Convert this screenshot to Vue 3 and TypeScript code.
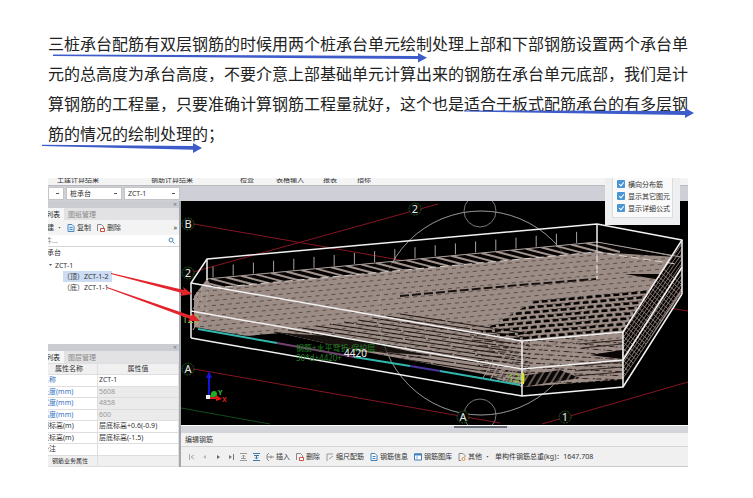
<script setup lang="ts">
import { ref } from 'vue'

interface Segment { x1: number; y1: number; x2: number; y2: number }
interface Property { name: string; value: string; linked: boolean; locked: boolean }
interface Bubble { x: number; y: number; label: string }

const ribbonGroups = ['土建计算结果', '钢筋计算结果', '检查', '表格输入', '报表', '指标']

const properties: Property[] = [
  { name: '名称', value: 'ZCT-1', linked: true, locked: false },
  { name: '长度(mm)', value: '5608', linked: true, locked: true },
  { name: '宽度(mm)', value: '4858', linked: true, locked: true },
  { name: '高度(mm)', value: '600', linked: true, locked: true },
  { name: '顶标高(m)', value: '层底标高+0.6(-0.9)', linked: false, locked: false },
  { name: '底标高(m)', value: '层底标高(-1.5)', linked: false, locked: false },
  { name: '备注', value: '', linked: false, locked: false },
]

const options = ref([
  { label: '横向分布筋', on: true },
  { label: '显示其它图元', on: true },
  { label: '显示详细公式', on: true },
])

const bubbles: Bubble[] = [
  { x: 188, y: 224, label: 'B' },
  { x: 188, y: 273, label: '2' },
  { x: 415, y: 209, label: '2' },
  { x: 188, y: 369, label: 'A' },
  { x: 463, y: 417, label: 'A' },
  { x: 565, y: 417, label: '1' },
]

function series(count: number, make: (i: number) => Segment): Segment[] {
  return Array.from({ length: count }, (_, i) => make(i))
}

// Height of the back row of bars at a given x
const backY = (x: number): number => 279 - (x - 207) * 0.095

const hooks = series(19, i => {
  const x = 213 + i * 20.2
  return { x1: x, y1: backY(x) - 12, x2: x, y2: backY(x) - 1 }
})
const slots = series(27, i => {
  const x = 196 + i * 15
  return { x1: x, y1: backY(x), x2: x + 34, y2: backY(x) + 9 }
})
const topGaps = series(18, i => ({ x1: 197, y1: 292 + i * 5, x2: 684, y2: 247 + i * 5 }))
const frontGaps = series(14, i => ({ x1: 400 - i * 14, y1: 314 + i * 2, x2: 530, y2: 334 + i * 4 }))
const coarseGaps = series(13, i => ({ x1: 470, y1: 308 + i * 5, x2: 690, y2: 288 + i * 5 }))
const cornerGaps = series(12, i => ({ x1: 470, y1: 330 + i * 5, x2: 630, y2: 344 + i * 4 }))
const bars = series(24, i => ({ x1: 484 + i * 7, y1: 390, x2: 544 + i * 7, y2: 290 }))
const faceBars = series(30, i => ({ x1: 618, y1: 325 + i * 5, x2: 688, y2: 225 + i * 5 }))
const faceCross = series(30, i => ({ x1: 618, y1: 230 + i * 6, x2: 688, y2: 290 + i * 6 }))
</script>

<template>
  <main class="page">
    <p class="lead">三桩承台配筋有双层钢筋的时候用两个桩承台单元绘制处理上部和下部钢筋设置两个承台单元的总高度为承台高度，不要介意上部基础单元计算出来的钢筋在承台单元底部，我们是计算钢筋的工程量，只要准确计算钢筋工程量就好，这个也是适合于板式配筋承台的有多层钢筋的情况的绘制处理的；</p>

    <svg class="marks" width="753" height="160" viewBox="0 0 753 160" aria-hidden="true">
      <g fill="#3d5cc9">
        <path d="M53 54.500L418 56V53L427 57.700L418 62.500V59L53 56Z" />
        <path d="M464 110.500L685 111V108L694 113L685 118V115L464 111.500Z" />
        <path d="M42 144.800L193 146V143L202 148L193 153V149.800L42 146Z" />
      </g>
    </svg>

    <section class="app">
      <header class="ribbon">
        <span v-for="g in ribbonGroups" :key="g">{{ g }}</span>
      </header>

      <div class="pickers">
        <select class="pick narrow" aria-label="楼层"><option></option></select>
        <select class="pick" aria-label="构件类型"><option>桩承台</option></select>
        <select class="pick" aria-label="构件"><option>ZCT-1</option></select>
      </div>

      <div class="work">
        <aside class="dock">
          <div class="grip"><button aria-label="关闭">×</button></div>
          <nav class="tabs">
            <button class="tab list active">构件列表</button>
            <button class="tab">图纸管理</button>
          </nav>
          <div class="tools">
            <button class="new">新建 <i class="caret"></i></button>
            <button>
              <svg width="8" height="8" viewBox="0 0 8 8"><path d="M1 .5H5L7 2.500V7.500H1Z" fill="#dcebf8" stroke="#4c8ac5" /><path d="M2.500 3.500H5.500M2.500 5.500H5.500" stroke="#4c8ac5" /></svg>复制
            </button>
            <button>
              <svg width="8" height="8" viewBox="0 0 8 8"><path d="M.5 7V.5H4.500L6.500 2.500V4" fill="none" stroke="#888" /><path d="M3.500 4.500H7.500V7.500H3.500Z" fill="#fff" stroke="#cf4b45" /></svg>删除
            </button>
            <button class="more" aria-label="更多">»</button>
          </div>
          <label class="search">
            <input type="text" placeholder="搜索构件..." aria-label="搜索构件" />
            <svg width="7" height="7" viewBox="0 0 7 7"><circle cx="3" cy="3" r="2" fill="none" stroke="#4788bd" /><path d="M4.500 4.500L6.500 6.500" stroke="#4788bd" /></svg>
          </label>
          <ul class="tree">
            <li>桩承台</li>
            <li class="child"><i class="caret"></i>ZCT-1</li>
            <li class="leaf"><span class="picked">（顶）ZCT-1-2</span></li>
            <li class="leaf"><span>（底）ZCT-1-1</span></li>
          </ul>
          <div class="grip"><button aria-label="关闭属性">×</button></div>
          <nav class="tabs">
            <button class="tab list active">属性列表</button>
            <button class="tab">图层管理</button>
          </nav>
          <table class="props">
            <thead><tr><th>属性名称</th><th>属性值</th></tr></thead>
            <tbody>
              <tr v-for="p in properties" :key="p.name" :class="{ locked: p.locked }">
                <td :class="{ linked: p.linked }">{{ p.name }}</td>
                <td>{{ p.value }}</td>
              </tr>
              <tr class="group"><td><button class="expand" aria-label="展开"></button>钢筋业务属性</td><td></td></tr>
            </tbody>
          </table>
        </aside>

        <div class="stage">
          <svg class="scene" viewBox="181 201 507 224" preserveAspectRatio="xMinYMin slice" role="img" aria-label="承台钢筋三维">
            <defs>
              <clipPath id="mat"><path d="M207 279L597 242L682 257V292L623 379L522 387L483 374L350 349L280 333L247 336L194 327V296Z" /></clipPath>
              <clipPath id="coarse"><path d="M540 298L600 284L655 284L623 331L522 341L480 332Z" /></clipPath>
              <clipPath id="corner"><path d="M470 334L522 341L623 332V380L522 387L480 374Z" /></clipPath>
              <clipPath id="face"><path d="M623 332L682 240V288L623 379Z" /></clipPath>
              <clipPath id="backrow"><path d="M207 279L597 242L676 257L597 252L213 288Z" /></clipPath>
            </defs>
            <rect x="181" y="201" width="507" height="224" fill="#000" />

            <g stroke="#851522" stroke-width="1">
              <path d="M194 224L417 263M193 272L438 204M194 369L500 423M542 424L688 382M650 305L688 311" />
            </g>
            <path d="M181 408L270 424" stroke="#164a1d" />
            <g fill="none" stroke="#777">
              <circle cx="481" cy="313" r="102" />
              <circle cx="480" cy="211" r="16" />
              <circle cx="480" cy="415" r="16" />
            </g>

            <g clip-path="url(#mat)">
              <rect x="181" y="201" width="507" height="224" fill="#9c8c86" />
              <g stroke="#5d4e48" stroke-width="1" stroke-dasharray="4 4">
                <line v-for="(s, i) in topGaps" :key="i" v-bind="s" :stroke-dashoffset="i * 3" />
              </g>
              <g stroke="#1d1613" stroke-width="1" stroke-dasharray="46 2">
                <line v-for="(s, i) in frontGaps" :key="i" v-bind="s" :stroke-dashoffset="i * 9" />
              </g>
              <path d="M280 333L345 337L430 356L350 349Z" fill="#191310" />
              <path d="M400 296L520 285L596 279" fill="none" stroke="#171210" stroke-width="2" stroke-dasharray="9 3" />
              <path d="M625 274L664 274L667 281Z" fill="#080504" />
            </g>
            <g clip-path="url(#coarse)">
              <g stroke="#060403" stroke-width="2.500" stroke-dasharray="6 3">
                <line v-for="(s, i) in coarseGaps" :key="i" v-bind="s" :stroke-dashoffset="i * 4" />
              </g>
            </g>
            <g clip-path="url(#corner)">
              <g stroke="#2c231f" stroke-width="1" stroke-dasharray="9 3">
                <line v-for="(s, i) in cornerGaps" :key="i" v-bind="s" :stroke-dashoffset="i * 5" />
              </g>
              <path d="M522 376L560 370L580 378L522 387Z" fill="#0b0706" />
              <g stroke="#a3938c" stroke-width="2">
                <line v-for="(s, i) in bars" :key="i" v-bind="s" stroke-opacity="0.6" />
              </g>
              <path d="M590 355L622 350V359L605 357Z" fill="#090605" />
              <path d="M580 344L622 340M582 348L622 344M575 366L622 362M575 371L622 367M575 376L622 372" stroke="#2c231f" />
            </g>
            <g clip-path="url(#backrow)">
              <rect x="181" y="201" width="507" height="100" fill="#060404" />
              <g stroke="#a3948e" stroke-width="2">
                <line v-for="(s, i) in slots" :key="i" v-bind="s" />
              </g>
            </g>
            <g clip-path="url(#face)">
              <rect x="600" y="220" width="88" height="180" fill="#070505" />
              <g stroke="#85766f" stroke-width="1">
                <line v-for="(s, i) in faceBars" :key="i" v-bind="s" />
                <line v-for="(s, i) in faceCross" :key="'c' + i" v-bind="s" />
              </g>
            </g>
            <g stroke="#aaa09c">
              <line v-for="(s, i) in hooks" :key="i" v-bind="s" />
              <path d="M207 279L597 242L681 257" fill="none" />
              <path d="M213 288L597 252L676 264" fill="none" stroke="#d8d2cf" stroke-dasharray="8 4" />
              <path d="M193 300L207 281M193 309L207 290M193 330L207 309M197 292V326M202 286V321M207 279V312" fill="none" stroke-dasharray="4 2" />
              <circle cx="481" cy="313" r="102" fill="none" stroke="#bbb" stroke-opacity="0.3" />
            </g>

            <g fill="none" stroke-width="2">
              <path d="M198 329L277 343M354 357L410 366M440 371L520 385" stroke="#32b7ad" />
              <path d="M277 343L354 357" stroke="#74416f" />
              <path d="M410 366L440 371" stroke="#4a35a0" />
            </g>
            <g stroke="#a3938c"><path d="M483 378L493 360M490 380L501 361M498 381L509 363M506 382L517 365" /></g>

            <g fill="none" stroke="#f2f2f2" stroke-width="1.500" stroke-linejoin="round">
              <path d="M207 259L597 224L682 240L623 332L522 341L191 283Z" />
              <path d="M191 311L522 369L623 360L682 267" />
              <path d="M191 338L522 396L623 387L682 294" />
              <path d="M191 283V338M522 341V396M623 332V387M682 240V294M207 259V280M597 224V243" />
              <path d="M597 243V279" stroke-width="1" stroke-dasharray="8 3" />
            </g>

            <g class="notes">
              <text x="296" y="351" fill="#228027">钢筋+水平弯折-保护层</text>
              <text x="296" y="361" fill="#228027">30*d+4420+</text>
              <text x="344" y="357" class="size" fill="#f0f0f0">4420</text>
              <text x="182" y="323" class="size" fill="#9cc13b">120</text>
              <text x="508" y="382" class="size" fill="#8cc83a">120</text>
              <path d="M523 373V384" stroke="#e4dc36" stroke-width="2" />
            </g>

            <g v-for="(b, i) in bubbles" :key="i">
              <circle :cx="b.x" :cy="b.y" r="6" fill="#050a05" stroke="#2c5a25" stroke-dasharray="2 1" />
              <text class="axis" :x="b.x" :y="b.y + 4" text-anchor="middle" fill="#e8e8e8">{{ b.label }}</text>
            </g>

            <path d="M209 396V376" stroke="#1414d8" stroke-width="2" />
            <path d="M206 378L209 371L212 378Z" fill="#1414d8" />
            <path d="M209 397L214 395" stroke="#1fae28" stroke-width="2" />
            <circle cx="214" cy="394" r="3" fill="#1fae28" />
            <path d="M210 397H216V395L222 399L216 401V399H210Z" fill="#e01818" />
            <rect x="206" y="395" width="4" height="4" fill="#eee" />
            <text class="gizmo" x="218" y="395" fill="#2fc23a">Y</text>
            <text class="gizmo" x="222" y="402" fill="#d81d1d">X</text>
          </svg>

          <div class="splitter"><i></i></div>
          <h2 class="caption">编辑钢筋</h2>
          <div class="commands">
            <button class="step" aria-label="首条"><svg width="6" height="6" viewBox="0 0 6 6"><path d="M.5 0V6M5 1L2 3L5 5" fill="none" stroke="#aaa" /></svg></button>
            <button class="step" aria-label="上一条"><svg width="6" height="6" viewBox="0 0 6 6"><path d="M4 1L1 3L4 5Z" fill="#bbb" /></svg></button>
            <button class="step" aria-label="下一条"><svg width="6" height="6" viewBox="0 0 6 6"><path d="M2 1L5 3L2 5Z" fill="#666" /></svg></button>
            <button class="step" aria-label="末条"><svg width="6" height="6" viewBox="0 0 6 6"><path d="M1 1L4 3L1 5ZM5 0H6V6H5Z" fill="#777" /></svg></button>
            <button class="step" aria-label="上移"><svg width="7" height="8" viewBox="0 0 7 8"><path d="M0 .5H7M0 7.500H7M1 5.500H6M3.500 5V2M2 3.500L3.500 2L5 3.500" fill="none" stroke="#999" /></svg></button>
            <button class="step" aria-label="下移"><svg width="7" height="8" viewBox="0 0 7 8"><path d="M0 .5H7M0 7.500H7M1 2.500H6M3.500 3V6M2 4.500L3.500 6L5 4.500" fill="none" stroke="#3c78ad" /></svg></button>
            <button><svg width="8" height="8" viewBox="0 0 8 8"><path d="M3 0L1 2V6L3 8M1 4H8M5 2.500V5.500" fill="none" stroke="#888" /></svg>插入</button>
            <button><svg width="8" height="8" viewBox="0 0 8 8"><path d="M.5 7V.5H4.500L6.500 2.500V4" fill="none" stroke="#888" /><path d="M3.500 4.500H7.500V7.500H3.500Z" fill="#fff" stroke="#cf4b45" /></svg>删除</button>
            <button><svg width="8" height="8" viewBox="0 0 8 8"><path d="M1 8V1H7M3 6L7 3" fill="none" stroke="#999" /></svg>缩尺配筋</button>
            <button><svg width="8" height="8" viewBox="0 0 8 8"><path d="M1 .5H5L7 2.500V7.500H1Z" fill="#fff" stroke="#3f7fb8" /><path d="M2.500 3.500H5.500M2.500 5.500H5.500" stroke="#3f7fb8" /></svg>钢筋信息</button>
            <button><svg width="8" height="8" viewBox="0 0 8 8"><path d="M.5 1H7.500V7H.5Z" fill="#fff" stroke="#3f7fb8" /><path d="M0 1.500H8" stroke="#3f7fb8" stroke-width="2" /><path d="M3 3V7" stroke="#8db5d8" /></svg>钢筋图库</button>
            <button><svg width="8" height="8" viewBox="0 0 8 8"><path d="M1 7.500V.5H5L7 2.500V4M1 7.500H3" fill="none" stroke="#888" /><circle cx="5.500" cy="6" r="1.500" fill="#fff" stroke="#dc8a38" /></svg>其他 <i class="caret"></i></button>
            <output>单构件钢筋总重(kg)：1647.708</output>
          </div>
        </div>
      </div>

      <fieldset class="options">
        <div class="options-body">
          <label v-for="o in options" :key="o.label">
            <input v-model="o.on" type="checkbox" />{{ o.label }}
          </label>
        </div>
      </fieldset>

      <svg class="pointers" width="160" height="60" viewBox="103 268 160 60" aria-hidden="true">
        <path d="M111 273L184 290L183 287L192 294L180 296L182 293L111 274Z" fill="#e3242c" />
        <path d="M107 287L192 316L192 313L200 321L188 321L190 319L107 288Z" fill="#e3242c" />
      </svg>
    </section>
  </main>
</template>

<style>
body { margin: 0; background: #fff; }
</style>

<style scoped>
.page {
  position: relative;
  padding: 28px 65px 31px 48px;
  font-family: "Noto Sans", "Noto Sans CJK SC", sans-serif;
  color: #333;
}
.lead {
  margin: 0 0 30px;
  font-family: "Noto Sans CJK SC", sans-serif;
  font-size: 16px;
  line-height: 30px;
  color: #222;
}
.marks { position: absolute; left: 0; top: 0; }
.app {
  position: relative;
  overflow: hidden;
  background: #f0f0f1;
  font-size: 7px;
  line-height: 11px;
}
button, input, select {
  margin: 0;
  padding: 0;
  border: 0;
  background: none;
  font: inherit;
  color: inherit;
}
svg { display: block; flex: none; }
.ribbon {
  display: grid;
  grid-template-columns: 94px 89px 36px 47px 34px 1fr;
  height: 7px;
  padding-left: 9px;
  overflow: hidden;
  border-bottom: 1px solid #b9babe;
  background: #f4f4f5;
  line-height: 4px;
  white-space: nowrap;
}
.pickers {
  display: flex;
  gap: 2px;
  height: 15px;
  background: #cfd0d7;
}
.pick {
  appearance: none;
  width: 56px;
  height: 13px;
  margin-top: 1px;
  padding-left: 3px;
  border: 1px solid #c3c4c8;
  border-radius: 0;
  background: linear-gradient(#555, #555) right 4px center / 3px 1px no-repeat #fff;
}
.narrow { width: 16px; }
.work { display: flex; }
.dock {
  display: flex;
  flex: none;
  flex-direction: column;
  width: 131px;
  overflow: hidden;
  border-right: 2px solid #a5a7ad;
  background: #fff;
}
.grip {
  display: flex;
  justify-content: flex-end;
  height: 7px;
  padding-right: 2px;
  background: #cbccd2;
  line-height: 7px;
  color: #777;
}
.tabs {
  display: flex;
  height: 12px;
  background: #e2e2e4;
}
.tab {
  padding: 0 4px;
  color: #888;
}
.tab.list {
  margin-left: -16px;
  padding-left: 0;
}
.tab.active { background: #f5f5f5; color: #222; }
.tools {
  display: flex;
  align-items: center;
  gap: 6px;
  height: 15px;
  margin-left: -8px;
  background: #f3f3f4;
}
.tools button, .commands button {
  display: flex;
  align-items: center;
  gap: 2px;
  white-space: nowrap;
}
.tools .more { margin-left: auto; padding-right: 2px; }
.caret {
  width: 3px;
  height: 2px;
  margin-left: 2px;
  background: #555;
  clip-path: polygon(0 0, 100% 0, 50% 100%);
}
.search {
  display: flex;
  align-items: center;
  height: 11px;
  margin-left: -24px;
  padding-right: 4px;
  border-bottom: 1px solid #d4d4d6;
  background: #fff;
}
.search input { flex: 1; min-width: 0; height: 11px; outline: 0; }
.search input::placeholder { color: #888; }
.tree {
  min-height: 97px;
  margin: 0;
  padding: 0;
  list-style: none;
  line-height: 11px;
}
.tree li { height: 12px; margin-left: -8px; white-space: nowrap; }
.tree .child { display: flex; align-items: center; gap: 3px; margin-left: -1px; }
.tree .leaf { height: 11px; margin-left: 15px; }
.leaf span { display: inline-block; padding-right: 3px; }
.picked { background: #cbdcf3; }
.props {
  width: 139px;
  height: 104px;
  margin-left: -8px;
  border-collapse: collapse;
  table-layout: fixed;
  line-height: 10px;
}
.props th, .props td {
  padding: 0 1px;
  border: 1px solid #dedee0;
  text-align: left;
  font-weight: 400;
  white-space: nowrap;
}
.props th { background: #f0f0f1; text-align: center; }
.props th:first-child { width: 54px; }
.props .linked { color: #3470c0; }
.locked td:last-child { background: #ebebec; color: #999; }
.group td { background: #f0f0f1; }
.props .group td:first-child { font-size: 6px; }
.expand {
  width: 6px;
  height: 6px;
  margin-right: 4px;
  border: 1px solid #999;
  background: #fff;
  vertical-align: middle;
}
.stage { display: flex; flex: 1; flex-direction: column; min-width: 0; }
.scene { width: 100%; height: 224px; }
.notes { font-size: 8px; }
.size { font-size: 10px; }
.axis { font-size: 11px; }
.gizmo { font-size: 7px; font-weight: 700; }
.splitter {
  display: flex;
  justify-content: center;
  height: 7px;
  padding-left: 92px;
  border-top: 1px solid #fff;
  background: #d4d5db;
}
.splitter i { width: 53px; height: 2px; background: #666c78; }
.caption {
  margin: 0;
  padding-left: 4px;
  border-bottom: 1px solid #d6d6d8;
  background: #f3f3f4;
  font-size: 7px;
  font-weight: 400;
  line-height: 13px;
}
.commands {
  display: flex;
  flex: 1;
  align-items: center;
  gap: 6px;
  padding-left: 7px;
  border-bottom: 1px solid #c9c9cc;
}
.commands .step { justify-content: center; width: 7px; }
.commands output { white-space: nowrap; }
.options {
  position: absolute;
  top: 0;
  right: 8px;
  margin: 0;
  padding: 0 7px 7px;
  border: 0;
  background: #edeff0;
}
.options-body {
  display: flex;
  flex-direction: column;
  padding: 0 2px 3px 4px;
  border: 1px solid #dadcde;
  border-top: 0;
  background: #fafafa;
}
.options label {
  display: flex;
  align-items: center;
  gap: 3px;
  height: 12px;
  white-space: nowrap;
}
.options input {
  appearance: none;
  width: 8px;
  height: 8px;
  border-radius: 1px;
  background: #4995d6;
  position: relative;
}
.options input:not(:checked) { background: #ccc; }
.options input:checked::after {
  content: "";
  position: absolute;
  left: 3px;
  top: 1px;
  width: 2px;
  height: 4px;
  border: solid #fff;
  border-width: 0 1px 1px 0;
  transform: rotate(40deg);
}
.pointers { position: absolute; left: 55px; top: 90px; }
</style>
